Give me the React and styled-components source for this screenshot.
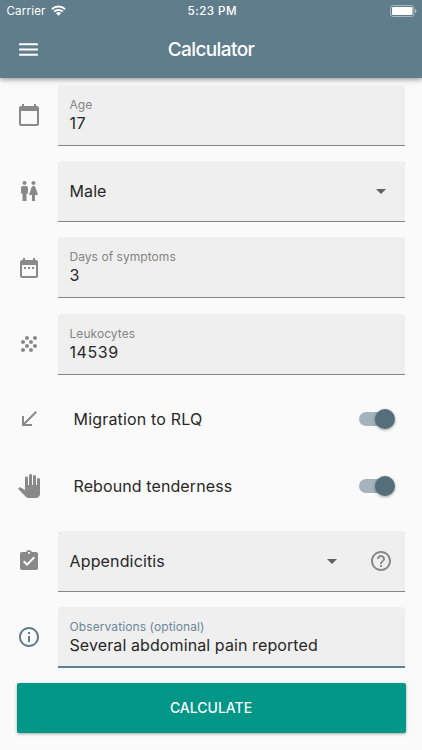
import React, {useState} from 'react';
import styled, {createGlobalStyle} from 'styled-components';
import {
    MdMenu,
    MdWc,
    MdDateRange,
    MdGrain,
    MdCallReceived,
    MdAssignmentTurnedIn,
    MdInfoOutline,
    MdHelpOutline,
    MdArrowDropDown,
} from 'react-icons/md';

const GlobalStyle = createGlobalStyle`
    body {
        margin: 0;
        background: #fafafa;
        font-family: Inter, Roboto, sans-serif;
    }
`

const Screen = styled.div`
    width: 100%;
    height: 750px;
    display: flex;
    flex-flow: column nowrap;
    overflow: hidden;
    background: #fafafa;
`

const Header = styled.header`
    height: 78px;
    flex: none;
    box-sizing: border-box;
    background: #607d8b;
    color: #fff;
    box-shadow: 0 2px 4px rgba(0,0,0,0.25), 0 1px 8px rgba(0,0,0,0.14);
`
const StatusBar = styled.div`
    height: 22px;
    padding: 0 5px 0 6.5px;
    display: grid;
    grid-template-columns: 1fr auto 1fr;
    align-items: center;
    font-size: 11.6px;
    line-height: 22px;
`
const Carrier = styled.span`
    display: flex;
    align-items: center;
    gap: 5px;
    letter-spacing: 0.15px;
    svg {
        margin-bottom: 1px;
    }
`
const Clock = styled.span`
    font-weight: 500;
    letter-spacing: 0.45px;
    padding-left: 1px;
`
const Power = styled.span`
    display: flex;
    justify-content: flex-end;
    padding-bottom: 1px;
`
const AppBar = styled.div`
    height: 54px;
    padding: 0 16px;
    display: grid;
    grid-template-columns: 25px 1fr 25px;
    align-items: center;
`
const Title = styled.h1`
    margin: 0;
    text-align: center;
    font-size: 19px;
    font-weight: 500;
    letter-spacing: -0.6px;
`
const MenuButton = styled.button`
    padding: 0;
    border: none;
    background: none;
    color: inherit;
    display: flex;
`

const Form = styled.main`
    padding: 6.5px 17px 0;
    display: flex;
    flex-flow: column nowrap;
`
const Row = styled.div`
    display: grid;
    grid-template-columns: 24px 1fr;
    column-gap: 16.5px;
    align-items: center;
    height: 61px;
    margin-bottom: ${props => props.$gap || '15.4px'};
    color: ${props => props.$focused ? '#607d8b' : '#898989'};
    svg {
        display: block;
    }
`
const Field = styled.div`
    height: 61px;
    box-sizing: border-box;
    padding: 0 12px;
    display: flex;
    align-items: center;
    background: #efefef;
    border-radius: 4px 4px 0 0;
    box-shadow: inset 0 ${props => props.$focused ? '-2px #607d9b' : '-1px #858585'};
`
const FieldText = styled.div`
    flex: 1;
    display: flex;
    flex-flow: column nowrap;
`
const Label = styled.label`
    font-size: 12px;
    line-height: 16px;
    letter-spacing: ${props => props.$spacing || '0.1px'};
    color: ${props => props.$focused ? '#6c8797' : '#858585'};
`
const Value = styled.span`
    font-size: 16px;
    line-height: 21px;
    letter-spacing: ${props => props.$spacing || '0.1px'};
    color: #282828;
`
const Arrow = styled(MdArrowDropDown)`
    color: #616161;
    margin-right: ${props => props.$spaced ? '25px' : '0'};
`

const SwitchRow = styled.div`
    height: 67px;
    display: grid;
    grid-template-columns: 24px 1fr 36px;
    align-items: center;
    padding-right: 10px;
    color: #898989;
    svg {
        display: block;
    }
`
const SwitchLabel = styled.span`
    padding-left: 32.5px;
    font-size: 16px;
    letter-spacing: ${props => props.$spacing};
    color: #282828;
`
const Track = styled.button`
    width: 33px;
    height: 14px;
    padding: 0;
    border: none;
    border-radius: 7px;
    background: ${props => props.$on ? '#a5b4ba' : '#bdbdbd'};
    display: flex;
    align-items: center;
    justify-content: ${props => props.$on ? 'flex-end' : 'flex-start'};
`
const Thumb = styled.span`
    flex: none;
    width: 20.5px;
    height: 20.5px;
    margin-right: -3px;
    border-radius: 50%;
    background: #546e7a;
    box-shadow: 0 1px 3px rgba(0,0,0,0.4);
`
const Switches = styled.div`
    margin-bottom: 10.9px;
`

const Submit = styled.button`
    height: 50px;
    margin: 0 -0.5px;
    padding: 0 0 1px;
    border: none;
    border-radius: 2px;
    background: #009688;
    color: #fff;
    font-family: inherit;
    font-size: 14px;
    font-weight: 500;
    box-shadow: 0 1px 3px rgba(0,0,0,0.35);
`

const Wifi = () => (
    <svg width="15" height="11" viewBox="0 0 15 11" fill="none" stroke="#fff" strokeWidth="1.9">
        <path d="M0.9 4.2a9.4 9.4 0 0 1 13.2 0" />
        <path d="M3.2 6.6a6.1 6.1 0 0 1 8.6 0" />
        <path d="M7.5 10.7L5 8.2a3.5 3.5 0 0 1 5 0z" fill="#fff" stroke="none" />
    </svg>
)

const Battery = () => (
    <svg width="27" height="12" viewBox="0 0 27 12">
        <rect x="0.5" y="0.5" width="23.5" height="11" rx="2.6" fill="none" stroke="#fff" strokeOpacity="0.45" />
        <rect x="2" y="2" width="20.5" height="8" rx="1.3" fill="#fff" />
        <path d="M25 4v4c0.9-0.4 1.4-1.1 1.4-2s-0.5-1.6-1.4-2z" fill="#fff" fillOpacity="0.5" />
    </svg>
)

const CalendarIcon = () => (
    <svg width="24" height="24" viewBox="0 0 24 24" fill="currentColor">
        <path d="M20 3h-1V1h-2v2H7V1H5v2H4c-1.1 0-2 .9-2 2v16c0 1.1.9 2 2 2h16c1.1 0 2-.9 2-2V5c0-1.1-.9-2-2-2zm0 18H4V8h16v13z" />
    </svg>
)

const HandIcon = () => (
    <svg width="24" height="24" viewBox="0 0 24 24" fill="currentColor">
        <path d="M23 5.5V20c0 2.2-1.8 4-4 4h-7.3c-1.08 0-2.1-.43-2.85-1.19L1 14.83s1.26-1.23 1.3-1.25c.22-.19.49-.29.79-.29.22 0 .42.06.6.16.04.01 4.31 2.46 4.31 2.46V4c0-.83.67-1.5 1.5-1.5S11 3.17 11 4v7h1V1.5c0-.83.67-1.5 1.5-1.5S15 .67 15 1.5V11h1V2.5c0-.83.67-1.5 1.5-1.5s1.5.67 1.5 1.5V11h1V5.5c0-.83.67-1.5 1.5-1.5s1.5.67 1.5 1.5z" />
    </svg>
)

const InputRow = ({icon, label, value, focused, gap, labelSpacing, valueSpacing}) => (
    <Row $focused={focused} $gap={gap}>
        {icon}
        <Field $focused={focused}>
            <FieldText>
                <Label $focused={focused} $spacing={labelSpacing}>{label}</Label>
                <Value $spacing={valueSpacing}>{value}</Value>
            </FieldText>
        </Field>
    </Row>
)

const SelectRow = ({icon, value, help, valueSpacing}) => (
    <Row>
        {icon}
        <Field>
            <FieldText>
                <Value $spacing={valueSpacing}>{value}</Value>
            </FieldText>
            <Arrow size={24} $spaced={help} />
            {help && <MdHelpOutline size={24} />}
        </Field>
    </Row>
)

const App = () => {
  const [migration, setMigration] = useState(true);
  const [rebound, setRebound] = useState(true);

  return <Screen>
      <GlobalStyle />
      <Header>
          <StatusBar>
              <Carrier>Carrier <Wifi /></Carrier>
              <Clock>5:23 PM</Clock>
              <Power><Battery /></Power>
          </StatusBar>
          <AppBar>
              <MenuButton aria-label='Menu'><MdMenu size={25} /></MenuButton>
              <Title>Calculator</Title>
          </AppBar>
      </Header>
      <Form>
          <InputRow icon={<CalendarIcon />} label='Age' value='17' labelSpacing='0' valueSpacing='0.6px' />
          <SelectRow icon={<MdWc size={24} />} value='Male' />
          <InputRow icon={<MdDateRange size={24} />} label='Days of symptoms' value='3' labelSpacing='0.05px' />
          <InputRow icon={<MdGrain size={24} />} label='Leukocytes' value='14539' gap='11px' labelSpacing='0.05px' valueSpacing='0.55px' />
          <Switches>
              <SwitchRow>
                  <MdCallReceived size={24} />
                  <SwitchLabel $spacing='0.18px'>Migration to RLQ</SwitchLabel>
                  <Track $on={migration} onClick={() => setMigration(!migration)}><Thumb /></Track>
              </SwitchRow>
              <SwitchRow>
                  <HandIcon />
                  <SwitchLabel $spacing='0.1px'>Rebound tenderness</SwitchLabel>
                  <Track $on={rebound} onClick={() => setRebound(!rebound)}><Thumb /></Track>
              </SwitchRow>
          </Switches>
          <SelectRow icon={<MdAssignmentTurnedIn size={24} />} value='Appendicitis' valueSpacing='0.15px' help />
          <InputRow
              icon={<MdInfoOutline size={24} />}
              label='Observations (optional)'
              value='Several abdominal pain reported'
              focused
          />
          <Submit>CALCULATE</Submit>
      </Form>
  </Screen>
}

export default App;
